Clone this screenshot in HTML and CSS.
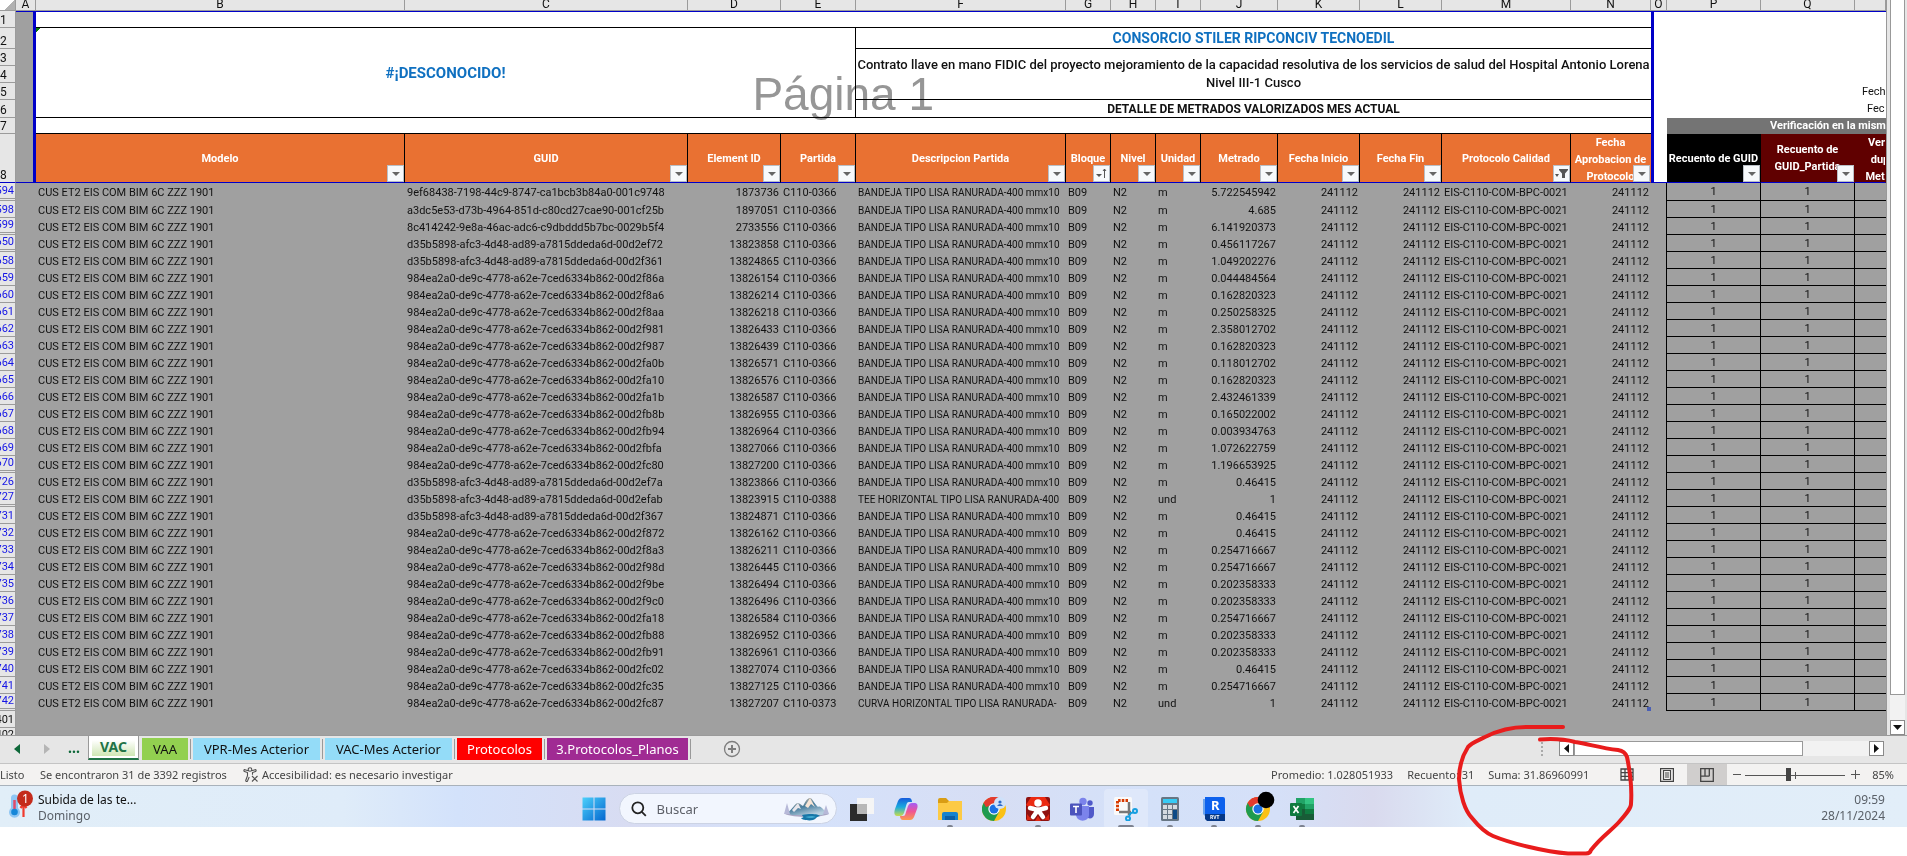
FILE: index.html
```html
<!DOCTYPE html>
<html lang="es">
<head>
<meta charset="utf-8">
<title>Metrados valorizados</title>
<link rel="stylesheet" href="styles.css">
</head>
<body>
<main class="workbook">
  <div class="pane">
    <table class="grid">
      <colgroup>
        <col class="w-head"><col class="w-a"><col class="w-b"><col class="w-c"><col class="w-d"><col class="w-e"><col class="w-f">
        <col class="w-s"><col class="w-s"><col class="w-s"><col class="w-j"><col class="w-k"><col class="w-k"><col class="w-m"><col class="w-n">
        <col class="w-o"><col class="w-p"><col class="w-p"><col class="w-r">
      </colgroup>
      <thead>
        <tr class="letters"><th class="corner"></th><th>A</th><th>B</th><th>C</th><th>D</th><th>E</th><th>F</th><th>G</th><th>H</th><th>I</th><th>J</th><th>K</th><th>L</th><th>M</th><th>N</th><th>O</th><th>P</th><th>Q</th><th></th></tr>
        <tr class="r1"><th class="num">1</th><td class="edge"></td><td class="rule" colspan="13"></td><td class="edge-r"></td><td colspan="3"></td></tr>
        <tr class="r2"><th class="num">2</th><td class="edge"></td><td class="rule rule-r brand error" colspan="4" rowspan="5">#¡DESCONOCIDO!</td><td class="rule brand" colspan="9">CONSORCIO STILER RIPCONCIV TECNOEDIL</td><td class="edge-r"></td><td colspan="3"></td></tr>
        <tr class="r3"><th class="num">3</th><td class="edge"></td><td class="rule contract" colspan="9" rowspan="3">Contrato llave en mano FIDIC del proyecto mejoramiento de la capacidad resolutiva de los servicios de salud del Hospital Antonio Lorena Nivel III-1 Cusco</td><td class="edge-r"></td><td colspan="3"></td></tr>
        <tr class="r3"><th class="num">4</th><td class="edge"></td><td class="edge-r"></td><td colspan="3"></td></tr>
        <tr class="r3"><th class="num">5</th><td class="edge"></td><td class="edge-r"></td><td colspan="3" class="cut">Fech</td></tr>
        <tr class="r6"><th class="num">6</th><td class="edge"></td><td class="rule detail" colspan="9">DETALLE DE METRADOS VALORIZADOS MES ACTUAL</td><td class="edge-r"></td><td colspan="3" class="cut far">Fec</td></tr>
        <tr class="r7"><th class="num">7</th><td class="edge"></td><td class="rule" colspan="13"></td><td class="edge-r"></td><td colspan="3" class="check">Verificación en la misma</td></tr>
        <tr class="titles" id="titles"><th class="num">8</th><td class="edge"></td></tr>
      </thead>
      <tbody id="rows"></tbody>
    </table>
    <div class="watermark">Página 1</div>
  </div>
  <div class="vscroll">
    <div class="vthumb"></div>
    <button class="sbtn" aria-label="Desplazar abajo"><svg width="9" height="5" viewBox="0 0 9 5"><path d="M0 0h9L4.500 5z" fill="#111"/></svg></button>
  </div>
</main>

<nav class="tabs" aria-label="Hojas">
  <button class="arrow" aria-label="Anterior"><svg width="6" height="10" viewBox="0 0 6 10"><path d="M6 0v10L0 5z" fill="#0e6839"/></svg></button>
  <button class="arrow" aria-label="Siguiente"><svg width="6" height="10" viewBox="0 0 6 10"><path d="M0 0v10l6-5z" fill="#b5b5b5"/></svg></button>
  <button class="dots">...</button>
  <button class="tab active">VAC</button>
  <button class="tab green">VAA</button>
  <button class="tab blue">VPR-Mes Acterior</button>
  <button class="tab blue">VAC-Mes Acterior</button>
  <button class="tab red">Protocolos</button>
  <button class="tab purple">3.Protocolos_Planos</button>
  <button class="plus" aria-label="Hoja nueva"><svg width="18" height="18" viewBox="0 0 18 18" fill="none" stroke="#7d7d7d"><circle cx="9" cy="9" r="7.500" stroke-width="1.300"/><path d="M9 5v8M5 9h8" stroke-width="2"/></svg></button>
  <div class="hscroll">
    <span class="grip"><i></i><i></i><i></i><i></i></span>
    <button class="sbtn" aria-label="Desplazar a la izquierda"><svg width="5" height="9" viewBox="0 0 5 9"><path d="M5 0v9L0 4.500z" fill="#111"/></svg></button>
    <div class="hthumb"></div>
    <div class="htrack"></div>
    <button class="sbtn" aria-label="Desplazar a la derecha"><svg width="5" height="9" viewBox="0 0 5 9"><path d="M0 0v9l5-4.500z" fill="#111"/></svg></button>
  </div>
</nav>

<section class="status">
  <span class="ready">Listo</span>
  <span class="found">Se encontraron 31 de 3392 registros</span>
  <span class="access"><svg width="16" height="16" viewBox="0 0 16 16" fill="none" stroke="#505050" stroke-width="1.100"><circle cx="7" cy="2.500" r="1.800"/><path d="M5.300 3.800 2 2.700C.8 2.400.5 4 1.500 4.400L4.500 5.600v3L2.800 13.200c-.3 1.300 1.200 1.700 1.700.7L6.200 10M8.700 3.800 12 2.700c1.200-.3 1.500 1.300.5 1.700l-3 1.200v2.200M9 9l5.500 5.500M14.500 9 9 14.500"/></svg>Accesibilidad: es necesario investigar</span>
  <span class="stats"><span>Promedio: 1.028051933</span><span>Recuento: 31</span><span>Suma: 31.86960991</span></span>
  <button class="view" aria-label="Normal"><svg width="14" height="14" viewBox="0 0 14 14" fill="none" stroke="#444" stroke-width="1.300"><path d="M1 1h12v11H1zM1 4.700h12M1 8.300h12M5 1v11M9 1v11"/></svg></button>
  <button class="view" aria-label="Diseño de página"><svg width="14" height="14" viewBox="0 0 14 14" fill="none" stroke="#444" stroke-width="1.200"><path d="M.6.6h12.800v12.800H.6zM3.500 2.500h7v9h-7zM5 5h4M5 7h4M5 9h4"/></svg></button>
  <button class="view on" aria-label="Salto de página"><svg width="14" height="14" viewBox="0 0 14 14" fill="none" stroke="#444" stroke-width="1.300"><path d="M.7.7h12.600v12.600H.7zM5 .7v7.500M9.300.7v7.500M.7 8.200h8.600"/></svg></button>
  <button class="step" aria-label="Alejar"><svg width="8" height="9" viewBox="0 0 8 9"><path d="M0 4.500h8" stroke="#555"/></svg></button>
  <input class="zoom" type="range" min="0" max="100" value="43" aria-label="Zoom">
  <button class="step" aria-label="Acercar"><svg width="9" height="9" viewBox="0 0 9 9"><path d="M0 4.500h9M4.500 0v9" stroke="#555"/></svg></button>
  <span class="percent">85%</span>
</section>

<footer class="taskbar">
  <div class="weather">
    <svg width="26" height="30" viewBox="0 0 26 30"><path d="M3 8a3.500 3.500 0 0 1 7 0v10a5.500 5.500 0 1 1-7 0z" fill="#8fc6f3"/><path d="M6.500 10v11" stroke="#e04b6b" stroke-width="2.500"/><circle cx="6.500" cy="22" r="3.300" fill="#1687d9"/><path d="M15.500 15v12M12.500 18l3-4 3 4" stroke="#f03a2e" stroke-width="2.200" fill="none"/><circle cx="17" cy="8.500" r="8" fill="#c42b1c"/><text x="14" y="13" font-size="12" fill="#fff">1</text></svg>
    <div><p class="headline">Subida de las te...</p><p class="sub">Domingo</p></div>
  </div>
  <div class="apps">
    <button class="app start" aria-label="Inicio"><svg width="24" height="24" viewBox="0 0 24 24"><defs><linearGradient id="w" x2="1" y2="1"><stop stop-color="#4cd0fb"/><stop offset="1" stop-color="#0467cf"/></linearGradient></defs><path d="M.5.500h11v11H.5zM12.500.500h11v11h-11zM.5 12.500h11v11H.5zM12.500 12.500h11v11h-11z" fill="url(#w)"/></svg></button>
    <label class="search">
      <svg width="16" height="16" viewBox="0 0 16 16" fill="none" stroke="#222" stroke-width="1.800"><circle cx="6.800" cy="6.800" r="5.500"/><path d="m10.800 10.800 4 4"/></svg>
      <input type="text" placeholder="Buscar" aria-label="Buscar">
      <svg width="46" height="24" viewBox="0 0 46 24"><defs><linearGradient id="mt" y1="0" x2=".6" y2="1"><stop stop-color="#edc7a4"/><stop offset=".55" stop-color="#477d9d"/><stop offset="1" stop-color="#b7cfdf"/></linearGradient></defs><path d="M1 17c9-3 33-3 44 0-8 4-36 4-44 0z" fill="#a9a7c4"/><path d="M3 16C9 12 11 6 14 6c3 1 3 2 5 3 3-6 5-8 7-8s4 5 8 9c3-2 5 3 9 6l-5 2H8z" fill="url(#mt)"/><path d="m26 1 5 9-4-3-3 4-3-2z" fill="#f7e5d6"/><path d="m14 6 3 6-3-1-4 4-2-2z" fill="#e8e6eb"/><path d="M18 18c8-2 17-1 18 1-5 1-3 3-7 4-4 1-11 0-12-2 4-1 2-1 1-3z" fill="#1677a8"/><path d="M21 20c4-1 9-1 11 0-3 1-8 1-11 0z" fill="#4cb9dd"/><path d="m3 6 3 11H0zM42 8l3 9h-6z" fill="#b7b9d8"/></svg>
    </label>
    <button class="app" aria-label="Vista de tareas"><svg width="24" height="24" viewBox="0 0 24 24"><path d="M0 7h17v17H0z" fill="#2b2b2b"/><path d="M7 1h17v16H7z" fill="#f5f5f5"/><path d="M7 7h10v10H7z" fill="#b7b7b7"/></svg></button>
    <button class="app" aria-label="Copilot"><svg width="24" height="24" viewBox="0 0 24 24"><defs><linearGradient id="c1" x2="0" y2="1"><stop stop-color="#165bdc"/><stop offset=".5" stop-color="#18a9df"/><stop offset="1" stop-color="#c8dc4b"/></linearGradient><linearGradient id="c2" x2="0" y2="1"><stop stop-color="#a55cf6"/><stop offset=".5" stop-color="#ef5595"/><stop offset="1" stop-color="#fb9b4d"/></linearGradient></defs><path d="M8 1h7c2 0 3 2 3 4h-3c-2 0-2 1-3 4l-2 7c-1 2-2 3-4 3H3c-3 0-3-4-2-7l3-8c1-2 2-3 4-3z" fill="url(#c1)"/><path d="M16 23H9c-2 0-3-2-3-4h3c2 0 2-1 3-4l2-6c1-2 2-3 4-3h3c3 0 3 4 2 6l-3 8c-1 2-2 3-4 3z" fill="url(#c2)"/></svg></button>
    <button class="app run" aria-label="Explorador"><svg width="24" height="24" viewBox="0 0 24 24"><path d="M0 3q0-2 2-2h6l3 3h13v8H0z" fill="#d99d14"/><path d="M0 6h9l2-2h13v19H0z" fill="#fcca45"/><path d="M4 23v-6q0-2 2-2h12q2 0 2 2v6z" fill="#1583ce"/><path d="M7 19h10v4H7z" fill="#0b5fa5"/></svg></button>
    <button class="app" aria-label="Chrome"><svg width="24" height="24" viewBox="0 0 24 24"><use href="#chrome"/><circle cx="18" cy="6" r="6" fill="#cfe1fa"/><circle cx="18" cy="5" r="1.600" fill="#2c6bc9"/><path d="M15 9q3-4 6 0z" fill="#2c6bc9"/></svg></button>
    <button class="app run" aria-label="Mendeley"><svg width="24" height="24" viewBox="0 0 24 24"><rect width="24" height="24" rx="2" fill="#8f1210"/><path d="M5 0h14l5 8-6 4-6-7-6 7-6-4z" fill="#ec2a12"/><path d="M1 17l5 6H1zM23 17l-5 6h5zM12 19l3 5H9z" fill="#dd2712"/><g fill="#fff" stroke="#fff" stroke-linecap="round" stroke-width="4.500"><path d="M12 13 4 11M12 13l8-2M12 13 7 20M12 13l5 7"/><circle cx="12" cy="6" r="1.500"/></g></svg></button>
    <button class="app" aria-label="Teams"><svg width="24" height="24" viewBox="0 0 24 24"><circle cx="13" cy="4.500" r="3.700" fill="#7b83eb"/><circle cx="20" cy="6" r="2.700" fill="#5059c9"/><path d="M15 10h9v7c0 5-6 6-8 2z" fill="#5059c9"/><path d="M6 9h13v9c0 7-12 8-13 0z" fill="#7b83eb"/><rect y="6.500" width="12" height="12" rx="1" fill="#4b53bc"/><path d="M3 9.500h6M6 9.500v6.500" stroke="#fff" stroke-width="1.600"/></svg></button>
    <button class="app run current" aria-label="Recortes"><svg width="24" height="24" viewBox="0 0 24 24"><rect width="18" height="18" rx="1.500" fill="#fafafa"/><path d="M3.500 14V3.500H14" fill="none" stroke="#d83b01" stroke-width="3" stroke-dasharray="2.500 1.200"/><path d="M15 5v13M5 15h12" stroke="#777" stroke-width="2.500"/><g fill="none" stroke="#169fe0" stroke-width="2"><circle cx="21" cy="14" r="2"/><circle cx="14" cy="21.500" r="2"/><path d="m15 19 2-3 3-1"/></g></svg></button>
    <button class="app run" aria-label="Calculadora"><svg width="24" height="24" viewBox="0 0 24 24"><rect x="3" width="18" height="24" rx="1.500" fill="#677684"/><path d="M5 2h14v4H5z" fill="#37cbf5"/><path d="M5 8h4v4H5zM10 8h4v4h-4zM15 8h4v4h-4zM5 13h4v4H5zM10 13h4v4h-4zM5 18h4v4H5zM10 18h4v4h-4z" fill="#d5dbe0"/><path d="M15 13h4v9h-4z" fill="#0c4a86"/></svg></button>
    <button class="app run" aria-label="Revit"><svg width="24" height="24" viewBox="0 0 24 24"><path d="M1 2h5v17H3l-2-2z" fill="#6ba3ed"/><path d="M3 0h18q2 0 2 2v17H3z" fill="#0d61ed"/><path d="M3 17h20v7H5l-2-2z" fill="#063887"/><text x="9" y="13" font-size="13" font-weight="700" fill="#fff">R</text><text x="8" y="22" font-size="5" font-weight="700" fill="#fff">RVT</text></svg></button>
    <button class="app run" aria-label="Chrome, segunda ventana"><svg class="spill" width="24" height="24" viewBox="0 0 24 24"><g id="chrome"><circle cx="12" cy="12" r="12" fill="#fbc116"/><path d="M12 12 1.600 6a12 12 0 0 1 20.800 0z" fill="#e33b2e"/><path d="M12 12 1.600 6A12 12 0 0 0 12 24l5-9z" fill="#1e9b50"/><path d="M1.600 6 7 15l5-9z" fill="#1e9b50"/><path d="M1.600 6A12 12 0 0 1 22.400 6H12l-5 3-3 1z" fill="#e33b2e"/><circle cx="12" cy="12" r="5.700" fill="#fff"/><circle cx="12" cy="12" r="4.500" fill="#1a70e4"/></g><circle cx="20" cy="3" r="8.300"/></svg></button>
    <button class="app run" aria-label="Excel"><svg width="24" height="24" viewBox="0 0 24 24"><path d="M6 1h9v7H6z" fill="#21a366"/><path d="M15 1h9v6h-9z" fill="#33c481"/><path d="M6 7h9v5H6z" fill="#107c41"/><path d="M15 7h9v5h-9z" fill="#21a366"/><path d="M6 12h9v6H6z" fill="#185c37"/><path d="M15 12h9v6h-9z" fill="#107c41"/><path d="M6 17h18v6H6z" fill="#185c37"/><rect y="6" width="12" height="13" rx="1" fill="#0f7a3f"/><path d="m3.500 9 5 7M8.500 9l-5 7" stroke="#fff" stroke-width="1.700"/></svg></button>
  </div>
  <div class="clock"><p>09:59</p><p>28/11/2024</p></div>
</footer>
<svg class="scribble" width="182" height="134" viewBox="1454 722 182 134" fill="none" stroke="#e81c1c" stroke-width="4" stroke-linecap="round" stroke-linejoin="round"><path d="M1563 727h-37C1510 727 1497 731 1485 737 1477 741 1471 743 1468 747 1461 758 1459 768 1459 779 1460 795 1465 811 1472 818 1480 828 1486 833 1493 836 1510 843 1545 852 1568 853.500H1585Q1590 854 1591 850C1602 836 1612 830 1619 822 1627 813 1631 808 1631 804 1632 790 1631 776 1627 757Q1625 751 1618 750C1600 748 1589 744 1575 742Q1560 738 1540 739.500"/></svg>
<script src="sheet.js"></script>
</body>
</html>
```
FILE: styles.css
```css
* { box-sizing: border-box; }
body { margin: 0; min-height: 100vh; background: #fff; color: #111; font: 12px/16px "Noto Sans", sans-serif; position: relative; }
p { margin: 0; }
button { font: inherit; color: inherit; padding: 0; border: 0; background: none; display: flex; align-items: center; justify-content: center; }
svg { flex: none; display: block; }

/* Sheet */
.workbook { display: flex; background: #e6e6e6; border-bottom: 1px solid #9a9a9a; }
.pane { position: relative; flex: 1; min-width: 0; overflow: hidden; background: #fff; }
.grid { width: 100%; table-layout: fixed; border-collapse: separate; border-spacing: 0; font: 11px/14px Roboto, sans-serif; }
.grid th, .grid td { padding: 0 2px; overflow: hidden; white-space: nowrap; text-align: left; }
.w-head { width: 16px; } .w-a { width: 20px; } .w-c { width: 283px; } .w-d { width: 93px; } .w-e { width: 75px; }
.w-f { width: 210px; } .w-s { width: 45px; } .w-j { width: 77px; } .w-k { width: 82px; } .w-m { width: 129px; }
.w-n { width: 80px; } .w-o { width: 16px; } .w-p { width: 94px; } .w-r { width: 31px; }

.grid .letters th { height: 11px; padding: 0; font: 12px/8px Roboto, sans-serif; text-align: center; vertical-align: top; background: #e6e6e6; border-right: 1px solid #9b9b9b; border-bottom: 1px solid #9b9b9b; overflow: visible; }
.grid .letters .corner { background: linear-gradient(135deg, transparent 58%, #b1b1b1 58%); border-bottom: 1px solid #9b9b9b; }
.grid .num { padding: 0 1px 0 0; background: #e6e6e6; border-right: 1px solid #9b9b9b; border-bottom: 1px solid #9b9b9b; font: 12px/14px Roboto, sans-serif; vertical-align: bottom; }
.grid .data .num { font-size: 11px; }
.grid .num div { display: flex; justify-content: flex-end; overflow: hidden; color: #1414e6; }
.grid .edge { background: #a0a0a0; border-right: 3px solid #0000c8; }
.grid .edge-r { border-left: 3px solid #0000c8; }
.r1 { height: 17px; } .r2 { height: 21px; } .r3 { height: 17px; } .r6 { height: 18px; } .r7 { height: 16px; }
.grid .r1 td { border-top: 1px solid #0000c8; }
.grid .rule { border-bottom: 1px solid #000; text-align: center; }
.grid .rule-r { border-right: 1px solid #000; }
.grid .brand { color: #0f70c0; font: 700 14px/18px Roboto, sans-serif; }
.grid .error { background: linear-gradient(135deg, #0a7a0a 3px, transparent 3px); font-size: 15px; }
.grid .contract { padding: 0; font: 500 13px/18px Roboto, sans-serif; white-space: normal; }
.grid .detail { font: 700 12px/16px Roboto, sans-serif; }
.grid .cut { padding-left: 195px; font-size: 11px; }
.grid .far { padding-left: 200px; }
.grid .check { padding-left: 103px; background: #747474; color: #fff; font: 700 11px/14px Roboto, sans-serif; }
.titles { height: 49px; }
.grid .titles > * { border-bottom: 1px solid #0000c8; }
.grid .title { position: relative; background: #e97132; color: #fff; font: 700 11px/17px Roboto, sans-serif; text-align: center; white-space: pre; border-right: 1px solid #000; }
.grid .title:nth-child(15) { border-right-color: #e97132; }
.grid .title span { display: block; max-height: 48px; margin: 0 -10px; }
.grid .black { background: #000; }
.grid .wine { background: #600000; border-right-color: #600000; }
.grid .last span { width: 46px; margin: 0; }
.filter { position: absolute; right: 0; bottom: 0; width: 17px; height: 17px; background: #f7f9fb; border: 1px solid #b9bfc6; }

.data { height: 17px; background: #a0a0a0; }
.data:first-child { height: 18px; }
.grid .data td { padding-top: 2px; }
.grid .data .name { font-size: 10px; }
.grid .data .r { text-align: right; }
.grid .data .boxed { padding-top: 1px; text-align: center; border-right: 1px solid #000; border-bottom: 1px solid #000; }
.grid .data .boxed:last-child { border-right: 0; }
.grid .data .gap { border-right: 1px solid #000; }
.grid .hidden-after .num { border-bottom: 3px double #9b9b9b; }
.grid .table-end { background: linear-gradient(#4a5fb5, #4a5fb5) right bottom / 4px 4px no-repeat; }
.grid .tail .num div { color: #111; }
.grid .partial { height: 7px; }
.grid .partial .num { border-bottom: 0; }
.grid .partial .num div { height: 7px; }
.watermark { position: absolute; right: 952px; top: 68px; font: 46px/52px "Liberation Sans", sans-serif; color: #969696; mix-blend-mode: multiply; white-space: nowrap; }

.vscroll { width: 21px; display: flex; flex-direction: column; padding: 0 2px 0 3px; border-left: 1px solid #999; background: linear-gradient(#f2f2f2, #f2f2f2) 3px 0 / 15px 100% no-repeat; }
.vthumb { height: 695px; background: #fff; border: 1px solid #999; border-top: 0; }
.vscroll .sbtn { margin-top: auto; }
.sbtn { width: 15px; height: 15px; background: #fff; border: 1px solid #8a8a8a; }

/* Sheet tabs */
.tabs { display: flex; align-items: center; height: 28px; padding-bottom: 2px; background: #e6e6e6; border-bottom: 1px solid #c4c4c4; font: 13px/20px "Noto Sans", sans-serif; }
.arrow { width: 30px; padding-left: 4px; }
.dots { width: 28px; color: #0e6839; font-weight: 700; font-size: 14px; margin-bottom: 2px; }
.tab { position: relative; height: 22px; margin: 0 4px 0 1px; color: #111; }
.tab + .tab { margin: 0 3px 0 2px; }
.tab + .tab::after { content: ""; position: absolute; right: -3px; top: 1px; width: 1px; height: 20px; background: #999; }
.active { width: 51px; height: 24px; align-self: flex-start; margin: 0 1px 0 0; color: #217346; font-size: 14px; font-weight: 700; background: linear-gradient(#fff 20%, #cfe6b4) 3px 0 / 43px 20px no-repeat #fff; border: 1px solid #999; border-width: 0 1px; border-bottom: 2px solid #217346; }
.green { width: 46px; background: #92d050; }
.blue { width: 127px; background: #94dcf8; }
.red { width: 85px; background: #f00; color: #fff; }
.purple { width: 141px; background: #a02b93; color: #fff; }
.plus { margin-left: 32px; }
.hscroll { display: flex; align-items: center; margin: 0 23px 0 auto; }
.grip { display: grid; gap: 2px; margin-right: 16px; }
.grip i { width: 2px; height: 2px; background: #aaa; }
.hthumb { width: 229px; height: 15px; background: #fff; border: 1px solid #999; }
.htrack { width: 66px; height: 15px; background: #f2f2f2; }

/* Status bar */
.status { display: flex; align-items: center; height: 22px; background: #f3f2f1; border-bottom: 1px solid #a9b2bb; color: #444; font: 11px/16px "Noto Sans", sans-serif; white-space: nowrap; }
.ready { width: 40px; }
.found { width: 203px; }
.access { display: flex; align-items: center; gap: 3px; }
.stats { display: flex; gap: 14px; margin: 0 18px 0 auto; }
.view { width: 40px; height: 21px; }
.on { background: #d0cecd; }
.step { margin-left: 6px; }
.zoom { appearance: none; width: 100px; height: 14px; margin: 0 0 0 4px; background: linear-gradient(#555, #555) 0 7px / 100% 1px no-repeat, linear-gradient(#555, #555) 50px 4px / 1px 7px no-repeat; }
.zoom::-webkit-slider-thumb { appearance: none; width: 5px; height: 13px; background: #444; }
.percent { margin: 0 13px 0 12px; }

/* Taskbar */
.taskbar { display: grid; grid-template-columns: 1fr auto 1fr; align-items: center; height: 41px; padding: 0 22px 0 8px; overflow: hidden; background: linear-gradient(90deg, #e1eef8 0%, #dfecf9 18%, #d3e2fb 24%, #d8dcf2 33%, #d5e2fb 42%, #d7def4 52%, #d4e1f9 60%, #d5e0f8 67%, #d9daee 72%, #dfecf9 77%, #e2eef9 100%); }
.weather { display: flex; gap: 4px; }
.weather div { margin-top: 2px; }
.sub, .clock { color: #5a6068; }
.clock { text-align: right; margin-top: 2px; }
.apps { display: flex; align-items: center; height: 41px; margin-left: 12px; padding-top: 4px; }
.app { position: relative; width: 44px; height: 40px; }
.start { width: 24px; margin-right: 13px; }
.run::after { content: ""; position: absolute; bottom: 1px; width: 6px; height: 3px; border-radius: 2px 2px 0 0; background: #7c8290; }
.current { background: #ffffff40; border-radius: 4px; }
.current::after { width: 16px; }
.spill { overflow: visible; }
.search { display: flex; align-items: center; width: 218px; height: 31px; margin-right: 3px; padding: 0 6px 0 11px; border-radius: 16px; background: #f2f6fe; border: 1px solid #ccd3e4; }
.search input { flex: 1; min-width: 0; margin-left: 10px; padding: 0; border: 0; outline: 0; background: none; font: 13px/18px "Noto Sans", sans-serif; }
.search input::placeholder { color: #5d6068; }
.scribble { position: absolute; top: 722px; right: 271px; pointer-events: none; }
```
FILE: sheet.js
```js
const titles = [
  ['Modelo'], ['GUID'], ['Element ID'], ['Partida'], ['Descripcion Partida'],
  ['Bloque', '', 'sort'], ['Nivel'], ['Unidad'], ['Metrado'], ['Fecha Inicio'], ['Fecha Fin'],
  ['Protocolo Calidad', '', 'funnel'], ['Fecha\nAprobacion de\nProtocolo'], null,
  ['Recuento de GUID', 'black'], ['Recuento de\nGUID_Partida', 'wine'], ['Verif\ndup\nMetra', 'wine last', 'none'],
];

const icons = {
  arrow: '<path d="M4 6h8l-4 4z" fill="#666"/>',
  sort: '<path d="M2 8h6l-3 3z" fill="#555"/><path d="M10.500 12V3M9 5l1.500-2L12 5" stroke="#555" fill="none"/>',
  funnel: '<path d="M1 8h4l-2 3zM5 3h9v1l-3 3.500V12H8V7.500L5 4z" fill="#555"/>',
};

const A = 'd35b5898-afc3-4d48-ad89-a7815ddeda6d-00d2';
const B = '984ea2a0-de9c-4778-a62e-7ced6334b862-00d2';
const tray = 'BANDEJA TIPO LISA RANURADA-400 mmx10';

const data = [
  ['594', '9ef68438-7198-44c9-8747-ca1bcb3b84a0-001c9748', '1873736', '5.722545942', 1],
  ['598', 'a3dc5e53-d73b-4964-851d-c80cd27cae90-001cf25b', '1897051', '4.685'],
  ['599', '8c414242-9e8a-46ac-adc6-c9dbddd5b7bc-0029b5f4', '2733556', '6.141920373', 1],
  ['650', A + 'ef72', '13823858', '0.456117267', 1],
  ['658', A + 'f361', '13824865', '1.049202276'],
  ['659', B + 'f86a', '13826154', '0.044484564'],
  ['660', B + 'f8a6', '13826214', '0.162820323'],
  ['661', B + 'f8aa', '13826218', '0.250258325'],
  ['662', B + 'f981', '13826433', '2.358012702'],
  ['663', B + 'f987', '13826439', '0.162820323'],
  ['664', B + 'fa0b', '13826571', '0.118012702'],
  ['665', B + 'fa10', '13826576', '0.162820323'],
  ['666', B + 'fa1b', '13826587', '2.432461339'],
  ['667', B + 'fb8b', '13826955', '0.165022002'],
  ['668', B + 'fb94', '13826964', '0.003934763'],
  ['669', B + 'fbfa', '13827066', '1.072622759'],
  ['670', B + 'fc80', '13827200', '1.196653925', 1],
  ['726', A + 'ef7a', '13823866', '0.46415'],
  ['727', A + 'efab', '13823915', '1', 1],
  ['731', A + 'f367', '13824871', '0.46415'],
  ['732', B + 'f872', '13826162', '0.46415'],
  ['733', B + 'f8a3', '13826211', '0.254716667'],
  ['734', B + 'f98d', '13826445', '0.254716667'],
  ['735', B + 'f9be', '13826494', '0.202358333'],
  ['736', B + 'f9c0', '13826496', '0.202358333'],
  ['737', B + 'fa18', '13826584', '0.254716667'],
  ['738', B + 'fb88', '13826952', '0.202358333'],
  ['739', B + 'fb91', '13826961', '0.202358333'],
  ['740', B + 'fc02', '13827074', '0.46415'],
  ['741', B + 'fc35', '13827125', '0.254716667'],
  ['742', B + 'fc87', '13827207', '1', 1],
];

// Rows whose item is not a straight tray: code, description and unit differ.
const special = {
  727: ['C110-0388', 'TEE HORIZONTAL TIPO LISA RANURADA-400', 'und'],
  742: ['C110-0373', 'CURVA HORIZONTAL TIPO LISA RANURADA-', 'und'],
};

const titleRow = document.getElementById('titles');
titleRow.insertAdjacentHTML('beforeend', titles.map(t => {
  if (!t) return '<td class="edge-r"></td>';
  const [text, tone = '', icon = 'arrow'] = t;
  const label = text.replace(/\n/g, ' ');
  const button = icon === 'none' ? '' :
    `<button class="filter" aria-label="Filtrar ${label}"><svg width="15" height="15" viewBox="0 0 15 15">${icons[icon]}</svg></button>`;
  return `<th class="title ${tone}"><span>${text}</span>${button}</th>`;
}).join(''));

const body = data.map(([num, guid, id, amount, gap]) => {
  const [code, name, unit] = special[num] || ['C110-0366', tray, 'm'];
  const end = num === '742' ? ' table-end' : '';
  return `<tr class="data${gap ? ' hidden-after' : ''}"><th class="num"><div>${num}</div></th><td></td>
    <td>CUS ET2 EIS COM BIM 6C ZZZ 1901</td><td>${guid}</td><td class="r">${id}</td><td>${code}</td>
    <td class="name">${name}</td><td>B09</td><td>N2</td><td>${unit}</td><td class="r">${amount}</td>
    <td class="r">241112</td><td class="r">241112</td><td>EIS-C110-COM-BPC-0021</td><td class="r${end}">241112</td>
    <td class="gap"></td><td class="boxed">1</td><td class="boxed">1</td><td class="boxed"></td></tr>`;
}).join('');

document.getElementById('rows').innerHTML = body +
  '<tr class="data tail"><th class="num"><div>401</div></th><td colspan="18"></td></tr>' +
  '<tr class="data tail partial"><th class="num"><div>402</div></th><td colspan="18"></td></tr>';
```
